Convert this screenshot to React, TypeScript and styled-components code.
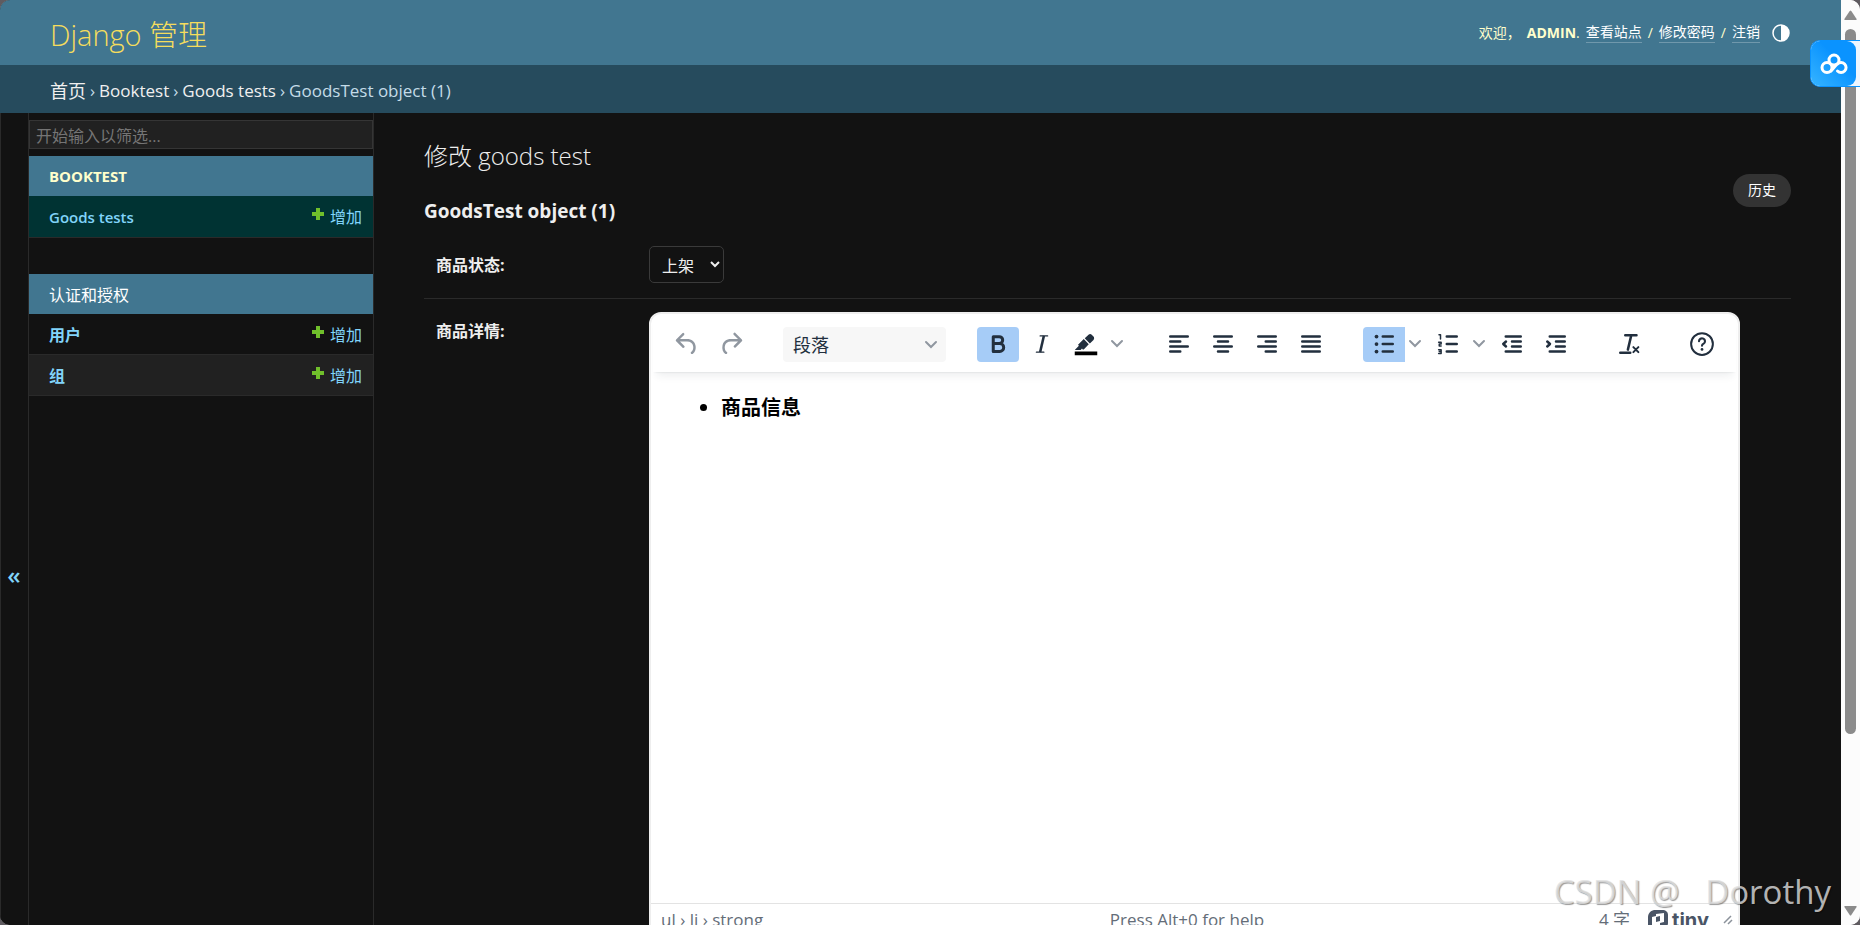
import React from 'react';
import styled, { createGlobalStyle } from 'styled-components';

const GlobalStyle = createGlobalStyle`
  *, *::before, *::after { box-sizing: border-box; }
  html, body, #root { height: 100%; }
  body {
    margin: 0;
    overflow: hidden;
    background: #5f5b60;
    color: #eeeeee;
    font-family: "Open Sans", "Noto Sans CJK SC", sans-serif;
    font-size: 16px;
  }
  a { color: #81d4fa; text-decoration: none; }
  button, input, select { font-family: inherit; margin: 0; }
  button { cursor: pointer; }
`;

const Window = styled.div`
  display: flex;
  height: 100vh;
  border-radius: 10px;
  overflow: hidden;
  background: #fcfcfc;
`;

const Page = styled.div`
  flex: 1;
  min-width: 0;
  display: flex;
  flex-direction: column;
  background: #121212;
  overflow: hidden;
`;

const Header = styled.header`
  flex: none;
  display: flex;
  justify-content: space-between;
  align-items: center;
  height: 65px;
  padding: 0 51px 0 50px;
  background: #417690;
  color: #ffffcc;
`;

const SiteName = styled.h1`
  margin: 0;
  padding-top: 4px;
  font-size: 29px;
  line-height: 40px;
  font-weight: 300;
  a { color: #f5dd5d; }
`;

const UserTools = styled.div`
  display: flex;
  align-items: center;
  gap: 6px;
  font-size: 14px;
  line-height: 20px;
  strong { font-weight: 700; text-transform: uppercase; }
  a { color: #ffffff; border-bottom: 1px solid rgba(255, 255, 255, 0.25); }
`;

const ThemeButton = styled.button`
  display: flex;
  margin-left: 6px;
  padding: 0;
  border: 0;
  background: none;
  color: #ffffff;
`;

const Breadcrumbs = styled.nav`
  flex: none;
  display: flex;
  align-items: center;
  gap: 4px;
  height: 48px;
  padding: 3px 50px 0;
  background: #264b5d;
  color: #c4dce8;
  font-size: 17px;
  line-height: 24px;
  a { color: #f0f0f0; }
  a:lang(zh) { font-size: 18px; }
`;

const Main = styled.div`
  flex: 1;
  min-height: 0;
  display: flex;
  align-items: stretch;
`;

const NavToggle = styled.button`
  flex: none;
  width: 29px;
  padding: 110px 1px 0 0;
  border: solid #2a2a2a;
  border-width: 0 1px;
  background: #121212;
  color: #81d4fa;
  font-size: 24px;
  font-weight: 600;
`;

const Sidebar = styled.nav`
  flex: none;
  width: 345px;
  padding-top: 7px;
  border-right: 1px solid #2a2a2a;
`;

const Filter = styled.input`
  display: block;
  width: 100%;
  height: 29px;
  padding: 3px 6px 0;
  border: 1px solid #353535;
  border-radius: 0;
  background: #212121;
  color: #eeeeee;
  font-size: 16px;
  outline: none;
  &::placeholder { color: #757575; opacity: 1; }
`;

const Module = styled.section`
  margin: 7px 0 36px;
`;

const ModuleTitle = styled.h2<{ $plain?: boolean }>`
  display: flex;
  align-items: center;
  height: 40px;
  margin: 0;
  padding: 0 20px;
  background: #417690;
  font-size: ${(p) => (p.$plain ? '16px' : '15px')};
  font-weight: ${(p) => (p.$plain ? 400 : 700)};
  text-transform: uppercase;
  a { color: ${(p) => (p.$plain ? '#ffffff' : '#ffffcc')}; }
`;

const ModelTable = styled.table`
  width: 100%;
  border-collapse: collapse;
`;

const ModelRow = styled.tr<{ $tone?: string }>`
  height: 41px;
  border-bottom: 1px solid #2a2a2a;
  background: ${(p) => p.$tone || 'transparent'};
  line-height: 20px;
  th { padding: 2px 20px 0; text-align: left; font-weight: 600; font-size: 15px; }
  th:lang(zh) { font-size: 16px; font-weight: 700; }
  td { padding: 2px 11px 0; text-align: right; font-size: 16px; }
`;

const AddLink = styled.a`
  display: flex;
  justify-content: flex-end;
  align-items: center;
  gap: 5px;
  svg { margin-bottom: 6px; }
`;

const Content = styled.main`
  flex: 1;
  min-width: 0;
  padding: 27px 50px 0;
`;

const Title = styled.h1`
  margin: 0;
  font-size: 24px;
  line-height: 32px;
  font-weight: 300;
`;

const ObjectBar = styled.div`
  display: flex;
  justify-content: space-between;
  align-items: flex-end;
  height: 52px;
`;

const ObjectName = styled.h2`
  margin: 0;
  font-size: 19px;
  line-height: 26px;
  font-weight: 700;
`;

const HistoryLink = styled.a`
  align-self: flex-start;
  margin-top: 2px;
  padding: 6px 15px 7px;
  border-radius: 17px;
  background: #333333;
  color: #ffffff;
  font-size: 14px;
  line-height: 20px;
`;

const Fieldset = styled.div`
  margin-top: 9px;
`;

const FormRow = styled.div`
  display: grid;
  grid-template-columns: 213px minmax(0, 1fr);
  padding: 13px 0 15px 12px;
  & + & { border-top: 1px solid #2a2a2a; }
`;

const Label = styled.label`
  padding-top: 7px;
  font-size: 16px;
  line-height: 24px;
  font-weight: 700;
`;

const StatusSelect = styled.select`
  justify-self: start;
  width: 75px;
  height: 37px;
  padding: 2px 0 0 8px;
  border: 1px solid #3a3a3a;
  border-radius: 5px;
  background: #121212;
  color: #eeeeee;
  font-size: 16px;
`;

const Editor = styled.div`
  margin-right: 51px;
  height: 626px;
  display: flex;
  flex-direction: column;
  border: 2px solid #eeeeee;
  border-radius: 12px;
  overflow: hidden;
  background: #ffffff;
  color: #222f3e;
`;

const Toolbar = styled.div`
  flex: none;
  display: flex;
  gap: 31px;
  margin: 0 2px;
  height: 58px;
  padding: 13px 13px 10px;
  box-shadow: 0 2px 2px -2px rgba(34, 47, 62, 0.15), 0 8px 8px -4px rgba(34, 47, 62, 0.08);
`;

const Group = styled.div`
  display: flex;
  gap: 2px;
`;

const Split = styled.div`
  display: flex;
`;

const ToolButton = styled.button<{ $active?: boolean; $split?: boolean; $muted?: boolean }>`
  display: flex;
  align-items: center;
  justify-content: center;
  width: 42px;
  height: 35px;
  padding: 0 0 1px;
  border: 0;
  border-radius: ${(p) => (p.$split ? '4px 0 0 4px' : '4px')};
  background: ${(p) => (p.$active ? '#a6ccf7' : 'transparent')};
  color: ${(p) => (p.$muted ? '#9097a0' : '#222f3e')};
`;

const SplitArrow = styled(ToolButton)`
  width: 20px;
  color: #9097a0;
`;

const BlockSelect = styled.div`
  display: grid;
  align-items: center;
  width: 163px;
  height: 35px;
  border-radius: 4px;
  background: #f7f7f7;
  select, svg { grid-area: 1 / 1; }
  select {
    appearance: none;
    width: 100%;
    height: 100%;
    padding: 0 10px;
    border: 0;
    background: transparent;
    color: #222f3e;
    font-size: 18px;
  }
  svg { justify-self: end; margin-right: 8px; color: #9097a0; pointer-events: none; }
`;

const Document = styled.div`
  flex: 1;
  padding: 20px;
  color: #000000;
  outline: none;
  ul { margin: 0; padding-left: 50px; }
  li { font-size: 20px; line-height: 32px; }
`;

const StatusBar = styled.div`
  flex: none;
  display: grid;
  grid-template-columns: 1fr auto 1fr;
  align-items: center;
  height: 33px;
  padding: 0 5px 0 10px;
  border-top: 1px solid #e3e3e3;
  color: #646d78;
  font-size: 17px;
  line-height: 24px;
`;

const HelpHint = styled.span`
  margin-right: 20px;
`;

const StatusRight = styled.div`
  display: flex;
  justify-content: flex-end;
  align-items: center;
`;

const Brand = styled.a`
  display: flex;
  align-items: center;
  gap: 4px;
  margin: 0 14px 0 18px;
  color: #4a5566;
  font-family: Inter, "Open Sans", sans-serif;
  font-size: 20px;
  font-weight: 700;
`;

const ScrollTrack = styled.div`
  flex: none;
  display: flex;
  flex-direction: column;
  align-items: center;
  width: 19px;
  padding: 10px 0 9px;
  background: #fcfcfc;
`;

const Thumb = styled.div`
  flex: 0 1 705px;
  width: 11px;
  margin: 9px 0 auto;
  border-radius: 6px;
  background: #8b8b8b;
`;

const DiskBadge = styled.button`
  position: absolute;
  top: 40px;
  right: 0;
  width: 50px;
  height: 47px;
  padding: 0;
  border: 1px solid #0a93ff;
  border-right: 0;
  border-radius: 10px 0 0 10px;
  background: #eef6ff;
`;

const DiskFace = styled.span`
  display: flex;
  align-items: center;
  justify-content: center;
  width: 45px;
  height: 45px;
  border-radius: 9px;
  background: linear-gradient(45deg, #36b4ff, #0a93ff 60%);
`;

const Watermark = styled.div`
  position: absolute;
  right: 29px;
  bottom: 13px;
  color: rgba(225, 225, 225, 0.8);
  font-size: 33px;
  line-height: 40px;
  white-space: pre;
  text-shadow: 1px 1px 1px rgba(0, 0, 0, 0.4);
  pointer-events: none;
`;

const Icon = ({ children }: { children: React.ReactNode }) => (
  <svg width="30" height="30" viewBox="0 0 24 24" fill="currentColor" aria-hidden="true">{children}</svg>
);

const Strokes = ({ d, width = 2 }: { d: string; width?: number }) => (
  <path d={d} fill="none" stroke="currentColor" strokeWidth={width} strokeLinecap="round" strokeLinejoin="round" />
);

const Chevron = () => (
  <svg width="14" height="10" viewBox="0 0 14 10" fill="none" stroke="currentColor" strokeWidth="2" strokeLinecap="round" aria-hidden="true">
    <path d="M2 2l5 5 5-5" />
  </svg>
);

const Plus = () => (
  <svg width="14" height="14" viewBox="0 0 14 14" aria-hidden="true">
    <path d="M5 1h4v4h4v4H9v4H5V9H1V5h4z" fill="#70bf2b" />
  </svg>
);

const Arrow = ({ down }: { down?: boolean }) => (
  <svg width="13" height="10" viewBox="0 0 13 10" fill="#8b8b8b" aria-hidden="true">
    <path d={down ? 'M1 0h11q1 0 .6 1L7.3 9q-.8 1-1.6 0L.4 1Q0 0 1 0z' : 'M1 10h11q1 0 .6-1L7.3 1q-.8-1-1.6 0L.4 9Q0 10 1 10z'} />
  </svg>
);

const ALIGN: [string, string][] = [
  ['左对齐', 'M5 6h14M5 10h8M5 14h14M5 18h8'],
  ['居中对齐', 'M5 6h14M8 10h8M5 14h14M8 18h8'],
  ['右对齐', 'M5 6h14M11 10h8M5 14h14M11 18h8'],
  ['两端对齐', 'M5 6h14M5 10h14M5 14h14M5 18h14'],
];

const Add = () => (
  <AddLink href="#add"><Plus />增加</AddLink>
);

const EditorToolbar = () => (
  <Toolbar role="toolbar">
    <Group>
      <ToolButton $muted aria-label="撤销">
        <Icon><path d="M6.4 8H12c3.7 0 6.2 2 6.8 5.1.6 2.7-.4 5.6-2.3 6.8a1 1 0 0 1-1-1.8c1.1-.6 1.8-2.7 1.4-4.6-.5-2.1-2.1-3.5-4.9-3.5H6.4l3.3 3.3a1 1 0 1 1-1.4 1.4l-5-5a1 1 0 0 1 0-1.4l5-5a1 1 0 0 1 1.4 1.4L6.4 8Z" /></Icon>
      </ToolButton>
      <ToolButton $muted aria-label="重做">
        <Icon><path d="M17.6 10H12c-2.8 0-4.4 1.4-4.9 3.5-.4 2 .3 4 1.4 4.6a1 1 0 1 1-1 1.8c-2-1.2-2.9-4.1-2.3-6.8.6-3 3-5.1 6.8-5.1h5.6l-3.3-3.3a1 1 0 1 1 1.4-1.4l5 5a1 1 0 0 1 0 1.4l-5 5a1 1 0 0 1-1.4-1.4l3.3-3.3Z" /></Icon>
      </ToolButton>
    </Group>
    <BlockSelect>
      <select aria-label="段落格式" defaultValue="p"><option value="p">段落</option></select>
      <Chevron />
    </BlockSelect>
    <Group>
      <ToolButton $active aria-label="粗体">
        <Icon><path d="M8.2 6.1H13a2.7 2.7 0 0 1 0 5.5H8.2zM8.2 11.6h5.2a3.1 3.1 0 0 1 0 6.3H8.2z" fill="none" stroke="currentColor" strokeWidth="2.4" strokeLinejoin="round" /></Icon>
      </ToolButton>
      <ToolButton aria-label="斜体">
        <Icon>
          <Strokes width={1} d="M10.5 5.5h6M7.5 18.5h6" />
          <path d="M13.5 5.5l-3 13" fill="none" stroke="currentColor" strokeWidth="2" />
        </Icon>
      </ToolButton>
      <Split>
        <ToolButton $split aria-label="背景颜色">
          <Icon>
            <path d="M3 18h18v3H3z" fill="#000000" />
            <path d="M7.7 16.7H3l3.3-3.3-.7-.8L10.2 8l4 4.1-4 4.2c-.2.2-.6.2-.8 0l-.6-.7-1.1 1.1zm5-7.5L11 7.4l3-2.9a2 2 0 0 1 2.6 0L18 6c.7.7.7 2 0 2.7l-2.9 2.9-1.8-1.8-.5-.6" />
          </Icon>
        </ToolButton>
        <SplitArrow aria-label="背景颜色菜单"><Chevron /></SplitArrow>
      </Split>
    </Group>
    <Group>
      {ALIGN.map(([label, d]) => (
        <ToolButton key={label} aria-label={label}><Icon><Strokes d={d} /></Icon></ToolButton>
      ))}
    </Group>
    <Group>
      <Split>
        <ToolButton $active $split aria-label="项目符号列表">
          <Icon>
            <Strokes d="M11 6h8M11 12h8M11 18h8" />
            <circle cx="6" cy="6" r="1.5" /><circle cx="6" cy="12" r="1.5" /><circle cx="6" cy="18" r="1.5" />
          </Icon>
        </ToolButton>
        <SplitArrow aria-label="项目符号列表菜单"><Chevron /></SplitArrow>
      </Split>
      <Split>
        <ToolButton $split aria-label="编号列表">
          <Icon>
            <Strokes d="M11 6h8M11 12h8M11 18h8" />
            <Strokes width={1.2} d="M4.8 4.5H6V8M4.5 10.5h2V12H5v1.5h1.5M4.5 16.5h2v3h-2M5 18h1.5" />
          </Icon>
        </ToolButton>
        <SplitArrow aria-label="编号列表菜单"><Chevron /></SplitArrow>
      </Split>
      <ToolButton aria-label="减少缩进">
        <Icon><Strokes d="M7 6h12M12 10h7M12 14h7M7 18h12M7.2 10L5 12l2.2 2" /></Icon>
      </ToolButton>
      <ToolButton aria-label="增加缩进">
        <Icon><Strokes d="M7 6h12M12 10h7M12 14h7M7 18h12M5 10l2.2 2L5 14" /></Icon>
      </ToolButton>
    </Group>
    <ToolButton aria-label="清除格式">
      <Icon>
        <Strokes d="M9 5h9M5 19h8M13.7 5.5l-2.6 11" width={2} />
        <Strokes d="M15.5 14.5l4 4M19.5 14.5l-4 4" width={1.6} />
      </Icon>
    </ToolButton>
    <ToolButton aria-label="帮助">
      <Icon>
        <circle cx="12" cy="12" r="8.7" fill="none" stroke="currentColor" strokeWidth="1.6" />
        <Strokes width={1.7} d="M9.6 9.8a2.4 2.3 0 1 1 3.7 1.9c-.9.5-1.3.8-1.3 1.6" />
        <circle cx="12" cy="16.3" r="1.1" />
      </Icon>
    </ToolButton>
  </Toolbar>
);

export default function App() {
  return (
    <>
      <GlobalStyle />
      <Window>
        <Page>
          <Header>
            <SiteName><a href="#home">Django 管理</a></SiteName>
            <UserTools>
              <span>欢迎，</span>
              <span><strong>admin</strong>.</span>
              <a href="#site">查看站点</a>
              <span>/</span>
              <a href="#password">修改密码</a>
              <span>/</span>
              <a href="#logout">注销</a>
              <ThemeButton aria-label="切换主题">
                <svg width="18" height="18" viewBox="0 0 18 18" aria-hidden="true">
                  <circle cx="9" cy="9" r="8" fill="none" stroke="currentColor" strokeWidth="1.5" />
                  <path d="M9 1a8 8 0 0 1 0 16z" fill="currentColor" />
                </svg>
              </ThemeButton>
            </UserTools>
          </Header>
          <Breadcrumbs>
            <a href="#home" lang="zh">首页</a>›<a href="#app">Booktest</a>›<a href="#list">Goods tests</a>›<span>GoodsTest object (1)</span>
          </Breadcrumbs>
          <Main>
            <NavToggle aria-label="切换导航">«</NavToggle>
            <Sidebar>
              <Filter type="search" placeholder="开始输入以筛选..." aria-label="筛选导航项" />
              <Module>
                <ModuleTitle><a href="#booktest">Booktest</a></ModuleTitle>
                <ModelTable>
                  <tbody>
                    <ModelRow $tone="#003333"><th scope="row"><a href="#goods">Goods tests</a></th><td><Add /></td></ModelRow>
                  </tbody>
                </ModelTable>
              </Module>
              <Module>
                <ModuleTitle $plain><a href="#auth">认证和授权</a></ModuleTitle>
                <ModelTable>
                  <tbody>
                    <ModelRow><th scope="row" lang="zh"><a href="#users">用户</a></th><td><Add /></td></ModelRow>
                    <ModelRow $tone="#212121"><th scope="row" lang="zh"><a href="#groups">组</a></th><td><Add /></td></ModelRow>
                  </tbody>
                </ModelTable>
              </Module>
            </Sidebar>
            <Content>
              <Title>修改 goods test</Title>
              <ObjectBar>
                <ObjectName>GoodsTest object (1)</ObjectName>
                <HistoryLink href="#history">历史</HistoryLink>
              </ObjectBar>
              <Fieldset>
                <FormRow>
                  <Label htmlFor="status">商品状态:</Label>
                  <StatusSelect id="status" defaultValue="1"><option value="1">上架</option></StatusSelect>
                </FormRow>
                <FormRow>
                  <Label as="div" id="detail-label">商品详情:</Label>
                  <Editor>
                    <EditorToolbar />
                    <Document role="textbox" aria-labelledby="detail-label" tabIndex={0}>
                      <ul><li><strong>商品信息</strong></li></ul>
                    </Document>
                    <StatusBar>
                      <span>ul › li › strong</span>
                      <HelpHint>Press Alt+0 for help</HelpHint>
                      <StatusRight>
                        <span>4 字</span>
                        <Brand href="#tiny">
                          <svg width="20" height="20" viewBox="0 0 20 20" aria-hidden="true">
                            <path d="M6 0h8c4 0 6 2 6 5v8c0 3-2 5-5 5l-7 2H4c-2 0-4-2-4-5V7c0-3 2-6 6-7z" fill="currentColor" />
                            <path d="M4 7l4-1V4l8-1v9l-4 1v2l-8 1z" fill="#ffffff" />
                            <path d="M8 7l4-1v5l-4 1z" fill="currentColor" />
                          </svg>
                          tiny
                        </Brand>
                        <svg width="10" height="10" viewBox="0 0 10 10" stroke="#8b929b" strokeWidth="1.5" aria-hidden="true"><path d="M1 8l7-7M5 9l4-4" /></svg>
                      </StatusRight>
                    </StatusBar>
                  </Editor>
                </FormRow>
              </Fieldset>
            </Content>
          </Main>
        </Page>
        <ScrollTrack aria-hidden="true"><Arrow /><Thumb /><Arrow down /></ScrollTrack>
      </Window>
      <DiskBadge aria-label="网盘">
        <DiskFace>
          <svg width="28" height="22" viewBox="0 0 28 22" fill="none" stroke="#ffffff" strokeWidth="3" strokeLinecap="round" aria-hidden="true">
            <circle cx="14" cy="7" r="5" />
            <circle cx="7" cy="14.5" r="5" />
            <path d="M17 11l-6 7M17.5 18a5 5 0 1 0 0-7" />
          </svg>
        </DiskFace>
      </DiskBadge>
      <Watermark>CSDN @   Dorothy</Watermark>
    </>
  );
}
